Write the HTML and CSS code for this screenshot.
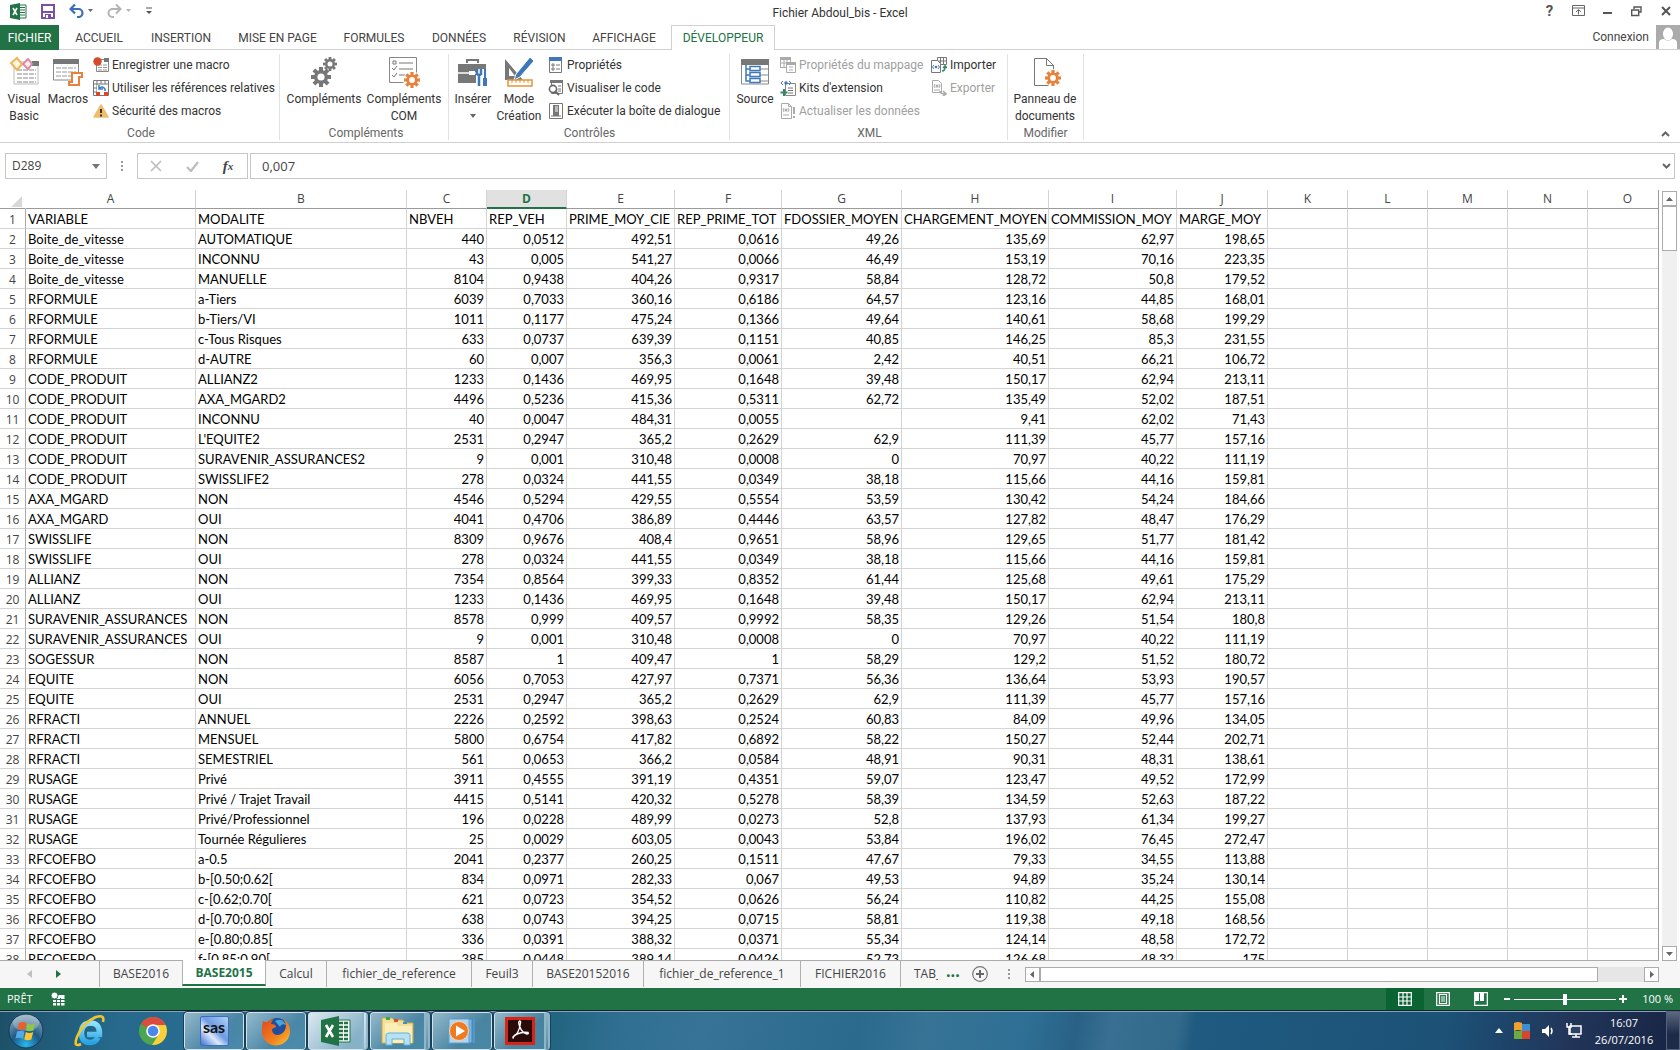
FILE: index.html
```html
<!DOCTYPE html>
<html lang="fr">
<head>
<meta charset="utf-8">
<title>Fichier Abdoul_bis - Excel</title>
<link rel="stylesheet" href="styles.css">
</head>
<body>
<svg class="defs" aria-hidden="true">
  <defs>
    <symbol id="gear" viewBox="-10 -10 20 20">
      <g fill="currentColor">
        <rect x="-2" y="-10" width="4" height="20"/>
        <rect x="-2" y="-10" width="4" height="20" transform="rotate(45)"/>
        <rect x="-2" y="-10" width="4" height="20" transform="rotate(90)"/>
        <rect x="-2" y="-10" width="4" height="20" transform="rotate(135)"/>
        <circle r="7"/>
      </g>
      <circle r="3.6" fill="#fff"/>
    </symbol>
    <linearGradient id="ieBlue" x1="0" y1="0" x2="0" y2="1"><stop offset="0" stop-color="#8fe3fb"/><stop offset="1" stop-color="#2aa3e4"/></linearGradient>
    <radialGradient id="orbBg" cx=".5" cy=".9" r=".9"><stop offset="0" stop-color="#27b9ee"/><stop offset=".45" stop-color="#1d5a86"/><stop offset="1" stop-color="#93aebe"/></radialGradient>
    <linearGradient id="foxFire" x1="0" y1="0" x2="1" y2="1"><stop offset="0" stop-color="#e2451b"/><stop offset=".6" stop-color="#f2821e"/><stop offset="1" stop-color="#fbc83a"/></linearGradient>
  </defs>
</svg>

<header class="titlebar">
  <div class="quick">
    <svg class="q-logo" width="17" height="17" viewBox="0 0 17 17"><path d="M9 2h7v13H9z" fill="#fff" stroke="#217346"/><path d="M10 4.500h5M10 7h5M10 9.500h5M10 12h5" stroke="#217346"/><path d="M0 2 10 0v17L0 15z" fill="#217346"/><path d="m3 5 4 7M7 5l-4 7" stroke="#fff" stroke-width="1.600"/></svg>
    <button class="icon-btn" aria-label="Enregistrer"><svg width="14" height="15" viewBox="0 0 14 15"><path d="M1 1h12v13H1z" fill="#fff" stroke="#7b4fa3" stroke-width="2"/><path d="M1 8h12" stroke="#7b4fa3" stroke-width="2"/><path d="M4 10h6v4H4z" fill="#7b4fa3"/><path d="M5 11h2v3H5z" fill="#fff"/></svg></button>
    <button class="icon-btn" aria-label="Annuler"><svg width="24" height="14" viewBox="0 0 24 14"><path d="M2 5h7.500a4 4 0 0 1 0 8H8" fill="none" stroke="#3b6fb5" stroke-width="2.200"/><path d="M6 .5 1.500 5 6 9.500" fill="none" stroke="#3b6fb5" stroke-width="2.200"/><path d="m19 5 2.500 3L24 5z" fill="#666"/></svg></button>
    <button class="icon-btn" aria-label="Répéter"><svg width="24" height="14" viewBox="0 0 24 14"><path d="M13 5H5.500a4 4 0 0 0 0 8H7" fill="none" stroke="#b4b4b4" stroke-width="2"/><path d="M9 .5 13.500 5 9 9.500" fill="none" stroke="#b4b4b4" stroke-width="2"/><path d="m19 5 2.500 3L24 5z" fill="#b4b4b4"/></svg></button>
    <button class="icon-btn" aria-label="Personnaliser"><svg width="8" height="8" viewBox="0 0 8 8"><path d="M1 1h6" stroke="#555"/><path d="m1 4 3 3 3-3z" fill="#555"/></svg></button>
  </div>
  <h1 class="doc-title">Fichier Abdoul_bis - Excel</h1>
  <div class="window-btns">
    <button class="win-btn help" aria-label="Aide">?</button>
    <button class="win-btn" aria-label="Affichage du ruban"><svg width="13" height="12" viewBox="0 0 13 12"><path d="M.5.5h12v10H.5zM.5 3h12M6.500 9.500V5M4 7l2.500-2.500L9 7" fill="none" stroke="#666"/></svg></button>
    <button class="win-btn" aria-label="Réduire"><svg width="10" height="12" viewBox="0 0 10 12"><path d="M0 8h9" stroke="#555" stroke-width="2"/></svg></button>
    <button class="win-btn" aria-label="Restaurer"><svg width="11" height="11" viewBox="0 0 11 11"><path d="M3 3V1h7v5H8" fill="none" stroke="#555" stroke-width="1.400"/><path d="M.700 4h7v5.500h-7z" fill="#fff" stroke="#555" stroke-width="1.400"/></svg></button>
    <button class="win-btn" aria-label="Fermer"><svg width="10" height="10" viewBox="0 0 10 10"><path d="m1 1 8 8M9 1 1 9" stroke="#555" stroke-width="2"/></svg></button>
  </div>
</header>

<nav class="tabs" aria-label="Ruban">
  <button class="file-tab">FICHIER</button>
  <button class="tab w-80">ACCUEIL</button>
  <button class="tab w-84">INSERTION</button>
  <button class="tab w-109">MISE EN PAGE</button>
  <button class="tab w-84">FORMULES</button>
  <button class="tab w-86">DONNÉES</button>
  <button class="tab w-75">RÉVISION</button>
  <button class="tab w-94">AFFICHAGE</button>
  <button class="tab active w-104">DÉVELOPPEUR</button>
  <a class="signin" href="#">Connexion</a>
  <svg class="avatar" width="24" height="24" viewBox="0 0 24 24"><path d="M0 0h24v24H0z" fill="#ababab"/><ellipse cx="12" cy="9" rx="5" ry="6.500" fill="#fff"/><path d="M3 24v-6q0-4 5-4 4 3.500 8 0 5 0 5 4v6z" fill="#fff"/></svg>
</nav>

<section class="ribbon" aria-label="Développeur">
  <div class="group g-code">
    <div class="tools">
      <button class="big w-42"><svg width="32" height="32" viewBox="0 0 32 32"><path d="M6 6h24v22H6z" fill="#fff" stroke="#bbb"/><path d="M24 5h7v5h-7z" fill="#777"/><path d="M9 14h19M9 18h19M9 22h19M9 26h19" stroke="#888" stroke-dasharray="5 1"/><path d="m9 2 5 6-5 6-6-7z" fill="#fff7e4" stroke="#ecb75a" stroke-width="2"/><path d="m20 3 4 5-4 5-5-5z" fill="#fdeef2" stroke="#e08aa2" stroke-width="2"/></svg><span>Visual<br>Basic</span></button>
      <button class="big w-46"><svg width="32" height="32" viewBox="0 0 32 32"><path d="M1.500 4h25v20h-25z" fill="#fff" stroke="#888"/><path d="M1 3h26v5H1z" fill="#777"/><path d="M4 12h20M4 16h20M4 20h20" stroke="#999" stroke-dasharray="5 1"/><path d="M20 17h10v4h-3v8H17v-3h3z" fill="#fff" stroke="#e8823a" stroke-width="2"/></svg><span>Macros</span></button>
      <div class="small-list">
        <button class="small"><svg width="16" height="16" viewBox="0 0 16 16"><path d="M3.500 2.500h12v12h-12z" fill="#fff" stroke="#888"/><path d="M11 1h5v4h-5z" fill="#777"/><path d="M5 8h9M5 10.500h9M5 13h9" stroke="#999" stroke-dasharray="4 1"/><circle cx="4.500" cy="4.500" r="4.200" fill="#d6492a"/></svg>Enregistrer une macro</button>
        <button class="small"><svg width="16" height="16" viewBox="0 0 16 16"><path d="M.5.5h15v15H.5zM4 0v16M8 0v4M12 0v4M0 4h16M0 8h4M0 12h4" fill="none" stroke="#777"/><path d="M4 5h11v9H4z" fill="#fff"/><path d="M6 9q3-4 6 0v2M6 5v4h4" fill="none" stroke="#3e7fc0" stroke-width="1.500"/><path d="M3 12h4v4H3zM11 12h4v4h-4z" fill="#d6492a"/></svg>Utiliser les références relatives</button>
        <button class="small"><svg width="16" height="16" viewBox="0 0 16 16"><path d="m8 2 7 12H1z" fill="#f0bd6c" stroke="#f0bd6c" stroke-width="1.500" stroke-linejoin="round"/><path d="M8 6v4M8 11.500v2" stroke="#333" stroke-width="2"/></svg>Sécurité des macros</button>
      </div>
    </div>
    <h2 class="group-name">Code</h2>
  </div>
  <div class="group g-addins">
    <div class="tools">
      <button class="big w-80"><svg class="gray" width="32" height="32" viewBox="0 0 32 32"><use href="#gear" x="3" y="11" width="20" height="20"/><use href="#gear" x="15" y="1" width="14" height="14"/></svg><span>Compléments</span></button>
      <button class="big w-80"><svg class="orange" width="32" height="32" viewBox="0 0 32 32"><path d="M1.500 1.500h27v25h-27z" fill="#fff" stroke="#888"/><path d="M5 5h3v3H5zM11 7h14M11 13h14M11 19h8M4 12l2 2 3-4M4 19l2 2 3-4" fill="none" stroke="#777"/><circle cx="24" cy="24" r="9" fill="#fff"/><use href="#gear" x="16" y="16" width="16" height="16"/></svg><span>Compléments<br>COM</span></button>
    </div>
    <h2 class="group-name">Compléments</h2>
  </div>
  <div class="group g-controls">
    <div class="tools">
      <button class="big w-46"><svg width="32" height="32" viewBox="0 0 32 32"><path d="M10 7V4h11v3" fill="none" stroke="#777" stroke-width="2"/><path d="M1 8h28v19H1z" fill="#777"/><path d="M1 17h28" stroke="#fff" stroke-width="1.500"/><path d="M12 15h6v4h-6z" fill="#fff"/><path d="M19 13h12v19H19z" fill="#fff"/><path d="M20 13v5q2 2 4 0v-5M22 18v12" fill="none" stroke="#3e78bb" stroke-width="2.500"/><path d="M28 13v10M28 22v8" stroke="#3e78bb" stroke-width="2"/><path d="M28 22v8" stroke="#3e78bb" stroke-width="4"/></svg><span>Insérer</span><svg width="6" height="14" viewBox="0 0 6 14"><path d="M0 6h6l-3 4z" fill="#666"/></svg></button>
      <button class="big w-46"><svg width="32" height="32" viewBox="0 0 32 32"><path d="M2 3v21h18zM6 12l6 8H6z" fill="#777" fill-rule="evenodd"/><path d="m27 1 4 4-14 16-6 3 2-6z" fill="#3e78bb" stroke="#fff"/><path d="M5 24h24v6H5z" fill="#fff" stroke="#e8943a" stroke-width="1.500"/><path d="M9 24v3M13 24v3M17 24v3M21 24v3M25 24v3" stroke="#e8943a"/></svg><span>Mode<br>Création</span></button>
      <div class="small-list indent">
        <button class="small"><svg width="16" height="16" viewBox="0 0 16 16"><path d="M1.500 1.500h12v14h-12z" fill="#fff" stroke="#777"/><path d="M1 0h13v4H1z" fill="#3e78bb"/><path d="M4 7h2v2H4zM4 11h2v2H4zM8 8h4M8 12h4" fill="none" stroke="#777"/></svg>Propriétés</button>
        <button class="small"><svg width="16" height="16" viewBox="0 0 16 16"><path d="M3.500 1.500h11v12h-11z" fill="#fff" stroke="#777"/><path d="M2 0h13v3H2z" fill="#777"/><path d="M10 6h3M10 9h3M10 11h3" stroke="#777"/><circle cx="5" cy="9" r="3.600" fill="#fff" stroke="#666" stroke-width="1.600"/><path d="m7 11 4 4" stroke="#666" stroke-width="2"/></svg>Visualiser le code</button>
        <button class="small"><svg width="16" height="16" viewBox="0 0 16 16"><path d="M1.500.5h13v15h-13z" fill="#fff" stroke="#777"/><path d="M5 2h6v11H5z" fill="#777"/><path d="M7 4h3M7 6h3M7 8h3" stroke="#fff"/><path d="M3 13h10" stroke="#777"/></svg>Exécuter la boîte de dialogue</button>
      </div>
    </div>
    <h2 class="group-name">Contrôles</h2>
  </div>
  <div class="group g-xml">
    <div class="tools">
      <button class="big w-46"><svg width="32" height="32" viewBox="0 0 32 32"><path d="M2.500 4h27v24h-27z" fill="#fff" stroke="#888"/><path d="M2 3h28v6H2z" fill="#777"/><path d="M21 13h8M21 19h8M21 25h8" stroke="#888"/><path d="M7 9v16h4M7 13h4M7 19h4" fill="none" stroke="#3e78bb" stroke-width="1.500"/><path d="M11 10.500h10v4H11zM11 16.500h10v4H11zM11 22.500h10v4H11z" fill="#fff" stroke="#3e78bb" stroke-width="1.500"/></svg><span>Source</span></button>
      <div class="small-list xml-one">
        <button class="small" disabled><svg width="16" height="16" viewBox="0 0 16 16"><path d="M.5 1.500h10v9H.5zM4 1v9M7 1v9M0 6h10" fill="#fff" stroke="#aaa"/><path d="M0 0h11v3H0z" fill="#aaa"/><path d="M6.500 6.500h9v9h-9zM9 10h4M9 13h4" fill="#fff" stroke="#aaa"/><path d="M6 5h10v3H6z" fill="#aaa"/></svg>Propriétés du mappage</button>
        <button class="small"><svg width="16" height="16" viewBox="0 0 16 16"><path d="M5.500 3.500h10v12h-10z" fill="#fff" stroke="#888"/><path d="M8 8h5M8 10.500h5M8 13h5" stroke="#777"/><path d="m3 1-2 2 2 2M9 1l2 2-2 2" fill="none" stroke="#3e78bb"/><circle cx="6" cy="3" r="1.700" fill="#3e78bb"/><path d="M4 9v7M.5 12.500h7" stroke="#2e8b62" stroke-width="2"/></svg>Kits d'extension</button>
        <button class="small" disabled><svg width="16" height="16" viewBox="0 0 16 16"><path d="M1.500.5h7l3 3v12h-10z" fill="#fff" stroke="#aaa"/><path d="M8.500.5v3h3" fill="none" stroke="#aaa"/><path d="m4 5-1 2 1 2M8 5l1 2-1 2M3 12h6" fill="none" stroke="#aaa"/><circle cx="6" cy="7" r="1.500" fill="#aaa"/><path d="M14 4v7M14 13v2" stroke="#aaa" stroke-width="2"/></svg>Actualiser les données</button>
      </div>
      <div class="small-list">
        <button class="small"><svg width="16" height="16" viewBox="0 0 16 16"><path d="M6.500.5h9v7h-9zM9.500 0v8M12.500 0v8M6 4h10" fill="#fff" stroke="#777"/><path d="M.5 3.500h6l3 3v9h-9z" fill="#fff" stroke="#777"/><path d="m3 8-1.500 2L3 12M7 8l1.500 2L7 12" fill="none" stroke="#3e78bb"/><circle cx="5" cy="10" r="1.300" fill="#3e78bb"/><path d="M11 14q3 0 3-4M12 11l2-2 2 2" fill="none" stroke="#2e8b62" stroke-width="1.600"/></svg>Importer</button>
        <button class="small" disabled><svg width="16" height="16" viewBox="0 0 16 16"><path d="M1.500.5h6l3 3v9h-9z" fill="#fff" stroke="#aaa"/><path d="m4 4-1 2 1 2M8 4l1 2-1 2M3 10h6" fill="none" stroke="#aaa"/><circle cx="6" cy="6" r="1.500" fill="#aaa"/><path d="M9 11q0 3 5 3M12 11l3 3-3 2" fill="none" stroke="#aaa" stroke-width="1.600"/></svg>Exporter</button>
      </div>
    </div>
    <h2 class="group-name">XML</h2>
  </div>
  <div class="group g-modify">
    <div class="tools">
      <button class="big w-74"><svg class="orange" width="32" height="32" viewBox="0 0 32 32"><path d="M5.500 2.500h12l7 7v20h-19z" fill="#fff" stroke="#777"/><path d="M17.500 2.500v7h7" fill="none" stroke="#777"/><circle cx="24" cy="22" r="9" fill="#fff"/><use href="#gear" x="16" y="14" width="16" height="16"/></svg><span>Panneau de<br>documents</span></button>
    </div>
    <h2 class="group-name">Modifier</h2>
  </div>
  <button class="collapse" aria-label="Réduire le ruban"><svg width="9" height="6" viewBox="0 0 9 6"><path d="m1 5 3.500-3.500L8 5" fill="none" stroke="#666" stroke-width="2"/></svg></button>
</section>

<div class="formula-bar">
  <div class="name-box"><input type="text" value="D289" aria-label="Zone Nom"><svg width="8" height="5" viewBox="0 0 8 5"><path d="M0 0h8L4 5z" fill="#777"/></svg></div>
  <span class="dots" aria-hidden="true"></span>
  <div class="entry-btns">
    <button class="icon-btn" aria-label="Annuler la saisie"><svg width="12" height="12" viewBox="0 0 12 12"><path d="m1 1 10 10M11 1 1 11" stroke="#bdbdbd" stroke-width="1.600"/></svg></button>
    <button class="icon-btn" aria-label="Valider"><svg width="13" height="11" viewBox="0 0 13 11"><path d="m1 6 4 4 7-9" fill="none" stroke="#bdbdbd" stroke-width="2.200"/></svg></button>
    <button class="icon-btn fx" aria-label="Insérer une fonction">f<sub>x</sub></button>
  </div>
  <div class="formula"><input type="text" value="0,007" aria-label="Barre de formule"><svg width="9" height="6" viewBox="0 0 9 6"><path d="m1 1 3.500 3.500L8 1" fill="none" stroke="#666" stroke-width="2"/></svg></div>
</div>

<main class="sheet">
  <div class="grid-view">
    <table class="grid">
      <colgroup><col class="c-head"><col class="c-a"><col class="c-b"><col class="c-std"><col class="c-std"><col class="c-e"><col class="c-f"><col class="c-g"><col class="c-h"><col class="c-i"><col class="c-j"><col class="c-std"><col class="c-std"><col class="c-std"><col class="c-std"><col></colgroup>
      <thead><tr><th class="corner"><svg width="11" height="11" viewBox="0 0 11 11"><path d="M11 0v11H0z" fill="#d8d8d8"/></svg></th><th>A</th><th>B</th><th>C</th><th class="selected">D</th><th>E</th><th>F</th><th>G</th><th>H</th><th>I</th><th>J</th><th>K</th><th>L</th><th>M</th><th>N</th><th>O</th></tr></thead>
      <tbody id="rows"></tbody>
    </table>
  </div>
  <div class="vscroll">
    <button class="scroll-btn" aria-label="Défiler vers le haut"><svg width="7" height="4" viewBox="0 0 7 4"><path d="M0 4h7L3.500 0z" fill="#666"/></svg></button>
    <div class="v-thumb"></div>
    <button class="scroll-btn last" aria-label="Défiler vers le bas"><svg width="7" height="4" viewBox="0 0 7 4"><path d="M0 0h7L3.500 4z" fill="#666"/></svg></button>
  </div>
</main>

<div class="sheet-bar">
  <div class="sheet-nav">
    <button class="icon-btn" aria-label="Feuille précédente"><svg width="5" height="8" viewBox="0 0 5 8"><path d="M5 0v8L0 4z" fill="#c0c0c0"/></svg></button>
    <button class="icon-btn" aria-label="Feuille suivante"><svg width="5" height="8" viewBox="0 0 5 8"><path d="M0 0v8l5-4z" fill="#217346"/></svg></button>
  </div>
  <button class="sheet-tab first s-82">BASE2016</button>
  <button class="sheet-tab current s-84">BASE2015</button>
  <button class="sheet-tab s-61">Calcul</button>
  <button class="sheet-tab s-145">fichier_de_reference</button>
  <button class="sheet-tab s-61">Feuil3</button>
  <button class="sheet-tab s-111">BASE20152016</button>
  <button class="sheet-tab s-157">fichier_de_reference_1</button>
  <button class="sheet-tab s-100">FICHIER2016</button>
  <button class="sheet-tab cut">TAB_</button>
  <button class="more" aria-label="Autres feuilles">...</button>
  <button class="icon-btn add" aria-label="Nouvelle feuille"><svg width="16" height="16" viewBox="0 0 16 16"><circle cx="8" cy="8" r="7.300" fill="none" stroke="#777" stroke-width="1.200"/><path d="M8 4v8M4 8h8" stroke="#666" stroke-width="2"/></svg></button>
  <span class="dots" aria-hidden="true"></span>
  <div class="hscroll">
    <button class="scroll-btn" aria-label="Défiler à gauche"><svg width="4" height="7" viewBox="0 0 4 7"><path d="M4 0v7L0 3.500z" fill="#666"/></svg></button>
    <div class="h-thumb"></div>
    <button class="scroll-btn last" aria-label="Défiler à droite"><svg width="4" height="7" viewBox="0 0 4 7"><path d="M0 0v7l4-3.500z" fill="#666"/></svg></button>
  </div>
</div>

<footer class="status">
  <span class="ready">PRÊT</span>
  <button class="icon-btn" aria-label="Enregistrer une macro"><svg width="14" height="14" viewBox="0 0 14 14"><path d="M2 3h11.500v10.500H2z" fill="#fff"/><path d="M2 7.500h12M2 10.500h12M5.500 6v8M9.500 6v8" stroke="#217346"/><circle cx="3.500" cy="3.500" r="3.500" fill="#fff" stroke="#217346"/></svg></button>
  <div class="views">
    <button class="view on" aria-label="Normal"><svg width="14" height="14" viewBox="0 0 14 14"><path d="M.7.7h12.600v12.600H.700zM5 0v14M9 0v14M0 5h14M0 9h14" fill="none" stroke="#fff" stroke-width="1.200"/></svg></button>
    <button class="view" aria-label="Mise en page"><svg width="14" height="14" viewBox="0 0 14 14"><path d="M.7.7h12.600v12.600H.700zM3.500 2.500h7v9h-7zM5 5h4M5 7h4M5 9h4" fill="none" stroke="#fff" stroke-width="1.200"/></svg></button>
    <button class="view" aria-label="Avec sauts de page"><svg width="14" height="14" viewBox="0 0 14 14"><path d="M.7.7h12.600v12.600H.700z" fill="none" stroke="#fff" stroke-width="1.200"/><path d="M1 1h4v8H1zM6 1h4v8H6z" fill="#fff"/></svg></button>
  </div>
  <button class="icon-btn" aria-label="Zoom arrière"><svg width="8" height="8" viewBox="0 0 8 8"><path d="M1 4h6" stroke="#fff" stroke-width="2"/></svg></button>
  <input class="zoom" type="range" min="0" max="100" value="50" aria-label="Zoom">
  <button class="icon-btn" aria-label="Zoom avant"><svg width="8" height="8" viewBox="0 0 8 8"><path d="M0 4h8M4 0v8" stroke="#fff" stroke-width="2"/></svg></button>
  <span class="zoom-value">100 %</span>
</footer>

<div class="taskbar">
  <button class="orb" aria-label="Démarrer"><svg width="38" height="38" viewBox="0 0 38 38"><circle cx="19" cy="19" r="17" fill="url(#orbBg)" stroke="#123a55"/><ellipse cx="19" cy="11" rx="13" ry="8" fill="#fff" opacity=".25"/><path d="M12 11q4-2 7.500 0l-1.500 7q-3.500-1.500-7.500 0z" fill="#e8602c"/><path d="M20.500 11.500q4 2 7.500 0l-1.500 7q-4 1.500-7.500 0z" fill="#8fc647"/><path d="M10 19.500q4-1.500 7.500 0L16 27q-4-2-7.500-.5z" fill="#57a8e8"/><path d="M18.800 20q3.500 2 7.500 0l-2 7.500q-3.500 1.500-7 0z" fill="#fbc62f"/></svg></button>
  <button class="pin" aria-label="Internet Explorer"><svg width="32" height="34" viewBox="0 0 32 34"><path d="M24 23.500q-2.500 5-8 5-8.500 0-8.500-9.500T16.500 9Q26 9 25.500 20.500H13" fill="none" stroke="url(#ieBlue)" stroke-width="5.500"/><path d="M7 30Q-1 34 3 23 9 8 22 3q9-3 7 5" fill="none" stroke="#f3c52c" stroke-width="2.600"/></svg></button>
  <button class="pin" aria-label="Chrome"><svg width="30" height="30" viewBox="0 0 30 30"><circle cx="15" cy="15" r="14" fill="#4ca64f"/><path d="M15 15 2.900 8A14 14 0 0 1 27.100 8z" fill="#dd4b3e"/><path d="M15 1a14 14 0 0 1 12.500 8H15z" fill="#dd4b3e"/><path d="M15 9h12.600A14 14 0 0 1 14 29l7-11z" fill="#fbce3c"/><circle cx="15" cy="15" r="6.800" fill="#fff"/><circle cx="15" cy="15" r="5.300" fill="#4b86ee"/></svg></button>
  <button class="task w-60" aria-label="SAS"><span class="sas">sas</span></button>
  <button class="task w-60" aria-label="Firefox"><svg width="30" height="30" viewBox="0 0 30 30"><circle cx="16" cy="13" r="11" fill="#1f4f9c"/><path d="M14 5q7-4 11 4-5-2-6 2z" fill="#43a6dc"/><path d="M2 5q1 1 4 1 3-3 7-3-3 2-3 5 5 0 5 3l-4 2q0 6 6 6 7-1 8-9-1-5-3-7 7 4 7 12a14 14 0 0 1-28 1q0-7 1-11z" fill="url(#foxFire)"/></svg></button>
  <button class="task stacked lit w-60" aria-label="Excel"><svg width="30" height="30" viewBox="0 0 30 30"><path d="M15 4h14v22H15z" fill="#fff" stroke="#217346"/><path d="M18 7h9M18 11h9M18 15h9M18 19h9M18 23h9" stroke="#217346" stroke-width="2.500"/><path d="M22.500 5v20" stroke="#fff"/><path d="M0 4 18 0v30L0 26z" fill="#217346"/><path d="m5 9 7 12M12 9 5 21" stroke="#fff" stroke-width="2.600"/></svg></button>
  <button class="task stacked w-60" aria-label="Explorateur"><svg width="34" height="30" viewBox="0 0 34 30"><path d="M1 2h10l2 2h9l2 3h8v20H1z" fill="#f3df95" stroke="#cda950"/><path d="M4 7h11l2 3h14v17H4z" fill="#fbeeb8"/><path d="M5 1h4v3H5z" fill="#43a544"/><path d="M13 3h4v3h-4z" fill="#d35330"/><path d="M22 6h4v2h-4z" fill="#4090cc"/><path d="M5 19q0-2 3-2h18q3 0 3 2v10h-6v-6H11v6H5z" fill="#b7e2f6" stroke="#64b1da"/></svg></button>
  <button class="task w-60" aria-label="Lecteur multimédia"><svg width="28" height="28" viewBox="0 0 28 28"><path d="M7 2h20v24H7z" fill="#5596c8"/><path d="M4 2h20v24H4z" fill="#84b9df" stroke="#3f82b7"/><path d="M1 2h20v24H1z" fill="#b2d7ef" stroke="#63a0cc"/><circle cx="11" cy="14" r="9.500" fill="#ee7a22" stroke="#fbd4ae"/><path d="m8 8.500 9 5.500-9 5.500z" fill="#fff"/></svg></button>
  <button class="task stacked w-56" aria-label="Adobe Reader"><svg width="30" height="28" viewBox="0 0 30 28"><path d="M1.500 1.500h27v25h-27z" fill="#2b0a0a" stroke="#d82317" stroke-width="3"/><path d="M8 20q6-3 7.500-14 .5-2-1-2-1.500 1 0 5 2.500 7 7.500 8 2 0 1-1.500-5-1-11 1.500-4 2-4 4 .5.500 0-1z" fill="none" stroke="#fff" stroke-width="1.400"/></svg></button>
  <div class="tray">
    <svg width="8" height="5" viewBox="0 0 8 5"><path d="M0 5h8L4 0z" fill="#fff"/></svg>
    <svg width="16" height="17" viewBox="0 0 16 17"><path d="M0 1q4-2 8 0v8q-4-2-8 0z" fill="#f1a02b"/><path d="M8 2h8v7H8z" fill="#3b8fd0"/><path d="M0 9h8v8H0z" fill="#6cab3f"/><path d="M8 9h8v8H8z" fill="#d8452d"/></svg>
    <svg width="14" height="14" viewBox="0 0 14 14"><path d="M1 5h3l4-4v12L4 9H1z" fill="#fff"/><path d="M10 4q2 3 0 6" fill="none" stroke="#fff" stroke-width="1.500"/></svg>
    <svg width="16" height="15" viewBox="0 0 16 15"><path d="M4 3h11v8H4z" fill="#2a4364" stroke="#fff" stroke-width="1.500"/><path d="M6 14h8M10 11v3" stroke="#fff" stroke-width="1.500"/><path d="M1 0v4h4V0M3 4v7h3" fill="none" stroke="#fff" stroke-width="1.500"/></svg>
  </div>
  <div class="clock"><time>16:07</time><time>26/07/2016</time></div>
  <button class="show-desktop" aria-label="Afficher le bureau"></button>
</div>
<script src="grid.js"></script>
</body>
</html>
```
FILE: styles.css
```css
* { box-sizing: border-box; }

body {
  margin: 0;
  height: 100vh;
  display: flex;
  flex-direction: column;
  overflow: hidden;
  background: #fff;
  color: #333;
  font: 12px/16px Roboto, "Open Sans", sans-serif;
}

button, input { font: inherit; color: inherit; }
button { padding: 0; border: 0; background: none; text-align: center; white-space: nowrap; }
input { min-width: 0; border: 0; padding: 0; background: none; outline: 0; }
h1, h2 { margin: 0; font-weight: 400; }
svg { display: block; flex: none; }
.defs { position: absolute; width: 0; height: 0; }
.icon-btn { display: flex; align-items: center; justify-content: center; }

/* Title bar */
.titlebar {
  display: grid;
  grid-template-columns: 1fr auto 1fr;
  align-items: center;
  height: 25px;
}
.quick { display: flex; align-items: center; gap: 14px; height: 25px; padding: 0 0 3px 10px; }
.doc-title { font-size: 12px; }
.window-btns { display: flex; justify-content: flex-end; height: 25px; padding-bottom: 3px; }
.win-btn { display: flex; align-items: center; justify-content: center; width: 29px; }
.help { font-size: 15px; font-weight: 700; color: #555; }

/* Ribbon tabs */
.tabs { display: flex; height: 25px; border-bottom: 1px solid #d0d0d0; color: #444; }
.file-tab { width: 59px; height: 25px; background: #217346; color: #fff; }
.tab { height: 25px; }
.tab.active { background: #fff; border: 1px solid #d0d0d0; border-bottom: 0; color: #217346; }
.signin { margin-left: auto; padding-right: 7px; line-height: 24px; color: #444; text-decoration: none; }
.w-42 { width: 42px; }
.w-46 { width: 46px; }
.w-56 { width: 56px; }
.w-60 { width: 60px; }
.w-74 { width: 74px; }
.w-75 { width: 75px; }
.w-80 { width: 80px; }
.w-84 { width: 84px; }
.w-86 { width: 86px; }
.w-94 { width: 94px; }
.w-104 { width: 104px; }
.w-109 { width: 109px; }

/* Ribbon */
.ribbon { display: flex; padding: 4px 0 2px; border-bottom: 1px solid #d0d0d0; }
.group { display: flex; flex-direction: column; border-right: 1px solid #e1e1e1; }
.tools { display: flex; height: 73px; }
.group-name { font-size: 12px; line-height: 13px; text-align: center; color: #666; }
.g-code { width: 280px; padding-left: 3px; }
.g-addins { width: 169px; padding-left: 4px; }
.g-controls { width: 281px; padding-left: 1px; }
.g-xml { width: 278px; padding-left: 2px; }
.g-modify { width: 76px; }
.big { display: flex; flex-direction: column; align-items: center; padding-top: 2px; line-height: 17px; }
.big > svg:first-child { margin-bottom: 3px; }
.gray { color: #777; }
.orange { color: #e8823a; }
.small-list { display: flex; flex-direction: column; margin: -1px 0 0 2px; }
.small-list.indent { margin-left: 6px; }
.small-list.xml-one { width: 149px; }
.small { display: flex; align-items: center; gap: 3px; height: 23px; }
.small:disabled { color: #a0a0a0; }
.collapse { margin-left: auto; align-self: flex-end; padding: 3px 10px; }

/* Formula bar */
.formula-bar { display: flex; height: 47px; padding: 10px 5px; font: 13px/24px "Open Sans", sans-serif; color: #444; }
.name-box, .entry-btns, .formula { display: flex; align-items: center; height: 26px; border: 1px solid #c6c6c6; }
.name-box { width: 102px; padding: 0 6px; font-size: 12px; }
.name-box input { flex: 1; }
.dots { width: 2px; height: 11px; margin: 8px 14px; background: repeating-linear-gradient(#999 0 2px, transparent 2px 4px); }
.entry-btns { width: 111px; }
.entry-btns .icon-btn { width: 36px; }
.fx { font: italic 700 15px "Liberation Serif", serif; }
.fx sub { font-size: 11px; }
.formula { flex: 1; margin-left: 2px; padding: 0 3px 0 11px; }
.formula input { flex: 1; }

/* Worksheet */
.sheet { flex: 1; min-height: 0; display: flex; }
.grid-view { flex: 1; min-width: 0; overflow: hidden; border-right: 1px solid #9b9b9b; border-bottom: 1px solid #ababab; }
/* the last column runs on past the right edge of the view */
.grid { width: calc(100% + 10px); table-layout: fixed; border-collapse: separate; border-spacing: 0; }
.grid th, .grid td { height: 20px; padding: 2px 2px 0; border: solid #d4d4d4; border-width: 0 1px 1px 0; overflow: hidden; white-space: nowrap; }
.grid th { font: 12px/17px "Open Sans", sans-serif; color: #444; text-align: center; }
.grid thead th { height: 19px; padding-top: 0; line-height: 18px; border-bottom-color: #9b9b9b; }
.grid thead th.selected { border-bottom: 2px solid #217346; background: #e1e1e1; color: #217346; font-weight: 700; line-height: 17px; }
.grid thead .corner { padding: 4px 3px 0; border-color: #fff #fff #9b9b9b; }
.corner svg { margin-left: auto; }
.grid tbody th { border-right-color: #ababab; padding: 2px 0 0; }
.grid td { font: 13px/17px Lato, sans-serif; color: #000; text-align: right; }
.grid td.text { text-align: left; }
.c-head { width: 26px; }
.c-a { width: 170px; }
.c-b { width: 211px; }
.c-std { width: 80px; }
.c-e { width: 108px; }
.c-f { width: 107px; }
.c-g { width: 120px; }
.c-h { width: 147px; }
.c-i { width: 128px; }
.c-j { width: 91px; }

/* Scroll bars */
.scroll-btn { display: flex; align-items: center; justify-content: center; width: 15px; height: 15px; border: 1px solid #ababab; background: #fff; }
.vscroll { display: flex; flex-direction: column; width: 18px; margin: 1px 0 0 3px; border-right: 3px solid #fff; background: #f0f0f0; }
.v-thumb { width: 15px; height: 45px; border: 1px solid #ababab; background: #fff; }
.vscroll .last { margin-top: auto; }
.hscroll { flex: 1; display: flex; height: 15px; margin: 6px 21px 0 0; background: #e6e6e6; }
.h-thumb { flex: none; width: 88%; height: 15px; border: 1px solid #ababab; background: #fff; }
.hscroll .last { margin-left: auto; }

/* Sheet tabs */
.sheet-bar { display: flex; height: 27px; background: #f6f6f6; font: 12px/26px "Open Sans", sans-serif; color: #444; }
.sheet-nav { display: flex; align-items: center; gap: 24px; width: 100px; height: 26px; padding-left: 27px; border-right: 1px solid #b0b0b0; }
.sheet-tab { height: 26px; border-right: 1px solid #b0b0b0; }
.sheet-tab.first { border-right: 0; }
.sheet-tab.current { margin-top: -1px; border: solid #b0b0b0; border-width: 0 1px; border-bottom: 2px solid #217346; background: #fff; color: #217346; font-weight: 700; }
.sheet-tab.cut { width: 37px; border: 0; padding-left: 13px; overflow: hidden; text-align: left; }
.more { height: 20px; padding-left: 8px; color: #217346; font-weight: 700; font-size: 16px; line-height: 20px; }
.add { height: 26px; margin-left: 12px; }
.sheet-bar .dots { margin: 8px 15px 0 20px; }
.s-61 { width: 61px; }
.s-82 { width: 82px; }
.s-84 { width: 84px; }
.s-100 { width: 100px; }
.s-111 { width: 111px; }
.s-145 { width: 145px; }
.s-157 { width: 157px; }

/* Status bar */
.status { display: flex; align-items: center; height: 22px; padding: 0 7px; background: #217346; color: #fff; font: 11px/22px "Open Sans", sans-serif; }
.ready { width: 44px; }
.views { display: flex; height: 22px; margin: 0 3px 0 auto; }
.view { display: flex; align-items: center; justify-content: center; width: 38px; }
.view.on { background: #0a6332; }
.zoom { appearance: none; width: 102px; height: 12px; margin: 0 3px; background: linear-gradient(#fff, #fff) center / 100% 1px no-repeat; }
.zoom::-webkit-slider-thumb { appearance: none; width: 4px; height: 11px; background: #fff; }
.zoom-value { width: 46px; text-align: right; }

/* Windows taskbar */
.taskbar {
  display: flex;
  height: 40px;
  border-top: 1px solid #16232e;
  box-shadow: inset 0 1px #7fa5b8;
  background: linear-gradient(100deg, #1d5067 0, #26698c 7%, #2b7093 18%, #276a88 32%, #226580 33%, #316f92 37%, #367396 42%, #2b698d 51%, #367395 55%, #2f6f95 61%, #296186 64%, #386f92 66%, #316a8b 70%, #1f5a80 71%, #1d5176 86%, #1e4268 90%, #22365a 93%, #172444 100%);
  color: #fff;
}
.orb { width: 58px; padding-left: 7px; }
.pin { display: flex; align-items: center; justify-content: center; width: 63px; }
.task {
  display: flex;
  align-items: center;
  justify-content: center;
  height: 38px;
  margin: 1px 2px 0 0;
  border: 1px solid #cfe2ea;
  border-radius: 3px;
  background: linear-gradient(135deg, rgba(220, 236, 244, .6), rgba(150, 190, 210, .3) 60%, rgba(130, 190, 220, .35));
  outline: 1px solid #1a4057;
}
.task.lit { background: linear-gradient(135deg, #dce9f0, #86b1c7 80%); }
.task.stacked { border-right: 6px double #8fb6c8; }
.sas { display: block; width: 29px; height: 30px; border: 1px solid #3b6cc4; border-radius: 2px; background: linear-gradient(45deg, #3f71d2, #dfe9fb 35%, #6b9be2 55%, #b5d3f3); color: #111; font: 700 16px/20px Lato, sans-serif; }
.tray { display: flex; align-items: center; gap: 11px; margin-left: auto; }
.clock { display: flex; flex-direction: column; justify-content: center; width: 84px; text-align: center; font: 11px/17px "Open Sans", sans-serif; }
.show-desktop { width: 14px; border: 1px solid #55627c; background: linear-gradient(#5c6880, #1d2a48 60%); }
```
FILE: grid.js
```js
// One line per worksheet row, columns A to J separated by "|".
const data = `VARIABLE|MODALITE|NBVEH|REP_VEH|PRIME_MOY_CIE|REP_PRIME_TOT|FDOSSIER_MOYEN|CHARGEMENT_MOYEN|COMMISSION_MOY|MARGE_MOY
Boite_de_vitesse|AUTOMATIQUE|440|0,0512|492,51|0,0616|49,26|135,69|62,97|198,65
Boite_de_vitesse|INCONNU|43|0,005|541,27|0,0066|46,49|153,19|70,16|223,35
Boite_de_vitesse|MANUELLE|8104|0,9438|404,26|0,9317|58,84|128,72|50,8|179,52
RFORMULE|a-Tiers|6039|0,7033|360,16|0,6186|64,57|123,16|44,85|168,01
RFORMULE|b-Tiers/VI|1011|0,1177|475,24|0,1366|49,64|140,61|58,68|199,29
RFORMULE|c-Tous Risques|633|0,0737|639,39|0,1151|40,85|146,25|85,3|231,55
RFORMULE|d-AUTRE|60|0,007|356,3|0,0061|2,42|40,51|66,21|106,72
CODE_PRODUIT|ALLIANZ2|1233|0,1436|469,95|0,1648|39,48|150,17|62,94|213,11
CODE_PRODUIT|AXA_MGARD2|4496|0,5236|415,36|0,5311|62,72|135,49|52,02|187,51
CODE_PRODUIT|INCONNU|40|0,0047|484,31|0,0055||9,41|62,02|71,43
CODE_PRODUIT|L'EQUITE2|2531|0,2947|365,2|0,2629|62,9|111,39|45,77|157,16
CODE_PRODUIT|SURAVENIR_ASSURANCES2|9|0,001|310,48|0,0008|0|70,97|40,22|111,19
CODE_PRODUIT|SWISSLIFE2|278|0,0324|441,55|0,0349|38,18|115,66|44,16|159,81
AXA_MGARD|NON|4546|0,5294|429,55|0,5554|53,59|130,42|54,24|184,66
AXA_MGARD|OUI|4041|0,4706|386,89|0,4446|63,57|127,82|48,47|176,29
SWISSLIFE|NON|8309|0,9676|408,4|0,9651|58,96|129,65|51,77|181,42
SWISSLIFE|OUI|278|0,0324|441,55|0,0349|38,18|115,66|44,16|159,81
ALLIANZ|NON|7354|0,8564|399,33|0,8352|61,44|125,68|49,61|175,29
ALLIANZ|OUI|1233|0,1436|469,95|0,1648|39,48|150,17|62,94|213,11
SURAVENIR_ASSURANCES|NON|8578|0,999|409,57|0,9992|58,35|129,26|51,54|180,8
SURAVENIR_ASSURANCES|OUI|9|0,001|310,48|0,0008|0|70,97|40,22|111,19
SOGESSUR|NON|8587|1|409,47|1|58,29|129,2|51,52|180,72
EQUITE|NON|6056|0,7053|427,97|0,7371|56,36|136,64|53,93|190,57
EQUITE|OUI|2531|0,2947|365,2|0,2629|62,9|111,39|45,77|157,16
RFRACTI|ANNUEL|2226|0,2592|398,63|0,2524|60,83|84,09|49,96|134,05
RFRACTI|MENSUEL|5800|0,6754|417,82|0,6892|58,22|150,27|52,44|202,71
RFRACTI|SEMESTRIEL|561|0,0653|366,2|0,0584|48,91|90,31|48,31|138,61
RUSAGE|Privé|3911|0,4555|391,19|0,4351|59,07|123,47|49,52|172,99
RUSAGE|Privé / Trajet Travail|4415|0,5141|420,32|0,5278|58,39|134,59|52,63|187,22
RUSAGE|Privé/Professionnel|196|0,0228|489,99|0,0273|52,8|137,93|61,34|199,27
RUSAGE|Tournée Régulieres|25|0,0029|603,05|0,0043|53,84|196,02|76,45|272,47
RFCOEFBO|a-0.5|2041|0,2377|260,25|0,1511|47,67|79,33|34,55|113,88
RFCOEFBO|b-[0.50;0.62[|834|0,0971|282,33|0,067|49,53|94,89|35,24|130,14
RFCOEFBO|c-[0.62;0.70[|621|0,0723|354,52|0,0626|56,24|110,82|44,25|155,08
RFCOEFBO|d-[0.70;0.80[|638|0,0743|394,25|0,0715|58,81|119,38|49,18|168,56
RFCOEFBO|e-[0.80;0.85[|336|0,0391|388,32|0,0371|55,34|124,14|48,58|172,72
RFCOEFBO|f-[0.85;0.90[|385|0,0448|389,14|0,0426|52,73|126,68|48,32|175`;

const columnCount = 15;
const body = document.getElementById("rows");

data.split("\n").forEach((line, r) => {
  const values = line.split("|");
  const row = body.insertRow();
  const head = document.createElement("th");
  head.scope = "row";
  head.textContent = r + 1;
  row.append(head);
  for (let c = 0; c < columnCount; c++) {
    const cell = row.insertCell();
    cell.textContent = values[c] || "";
    if (c < 2 || r === 0) cell.className = "text";
  }
});
```
